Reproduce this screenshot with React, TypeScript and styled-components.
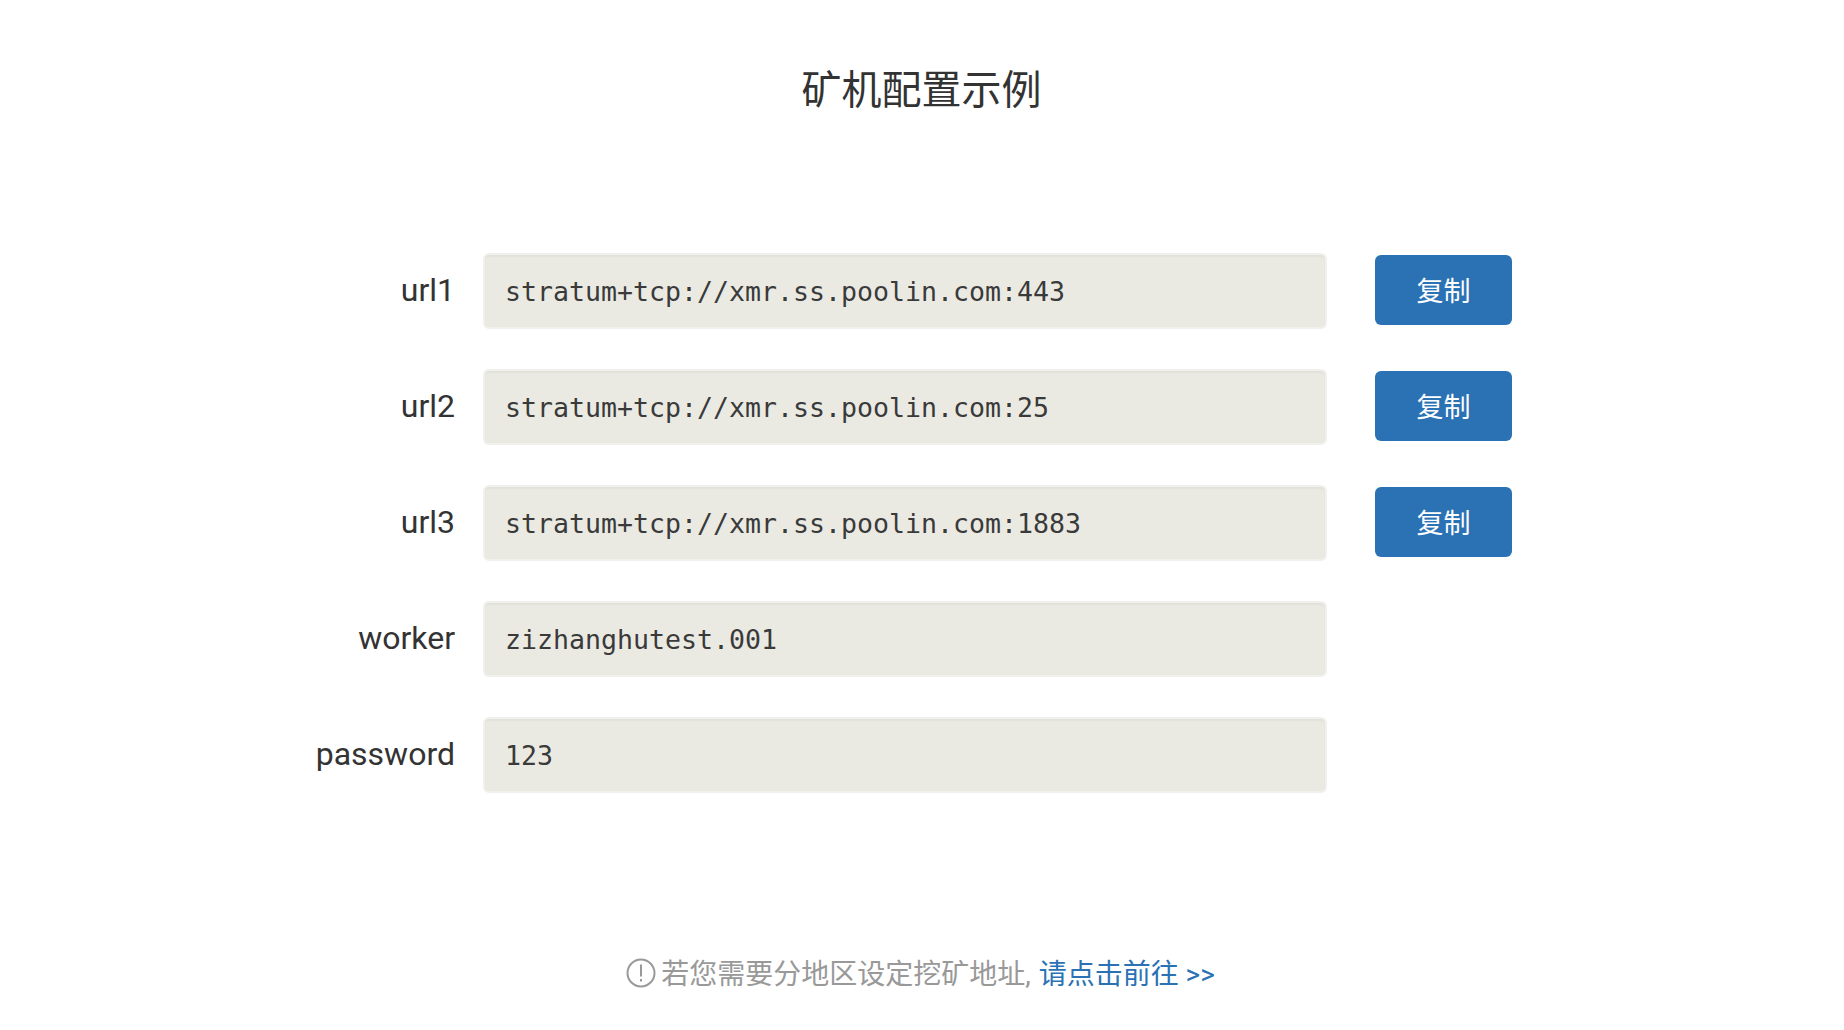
import React from "react";
import styled, { createGlobalStyle } from "styled-components";

const Global = createGlobalStyle`
  html, body { margin: 0; padding: 0; background: #fff; }
  body { font-family: Roboto, "Noto Sans CJK SC", sans-serif; color: #333; }
`;

const Page = styled.div`
  width: 1844px;
  height: 1030px;
  overflow: hidden;
  display: flex;
  flex-direction: column;
  align-items: center;
`;

const Title = styled.h1`
  margin: 61px 0 0 -1px;
  height: 60px;
  font-size: 40px;
  line-height: 60px;
  font-weight: 400;
  color: #333;
  font-family: Roboto, "Noto Sans CJK SC", sans-serif;
`;

const Form = styled.div`
  margin-top: 132px;
  width: 100%;
  padding-left: 300px;
  box-sizing: border-box;
  display: flex;
  flex-direction: column;
  gap: 40px;
`;

const Row = styled.div`
  display: flex;
  align-items: center;
  height: 76px;
`;

const Label = styled.label`
  width: 155px;
  text-align: right;
  font-size: 32px;
  line-height: 40px;
  color: #333;
  margin-right: 28px;
  margin-top: -2px;
`;

const Field = styled.div`
  box-sizing: border-box;
  width: 844px;
  height: 76px;
  border: 2px solid #f0f0ed;
  border-radius: 6px;
  background: #eaeae3;
  box-shadow: inset 0 2px 2px rgba(0, 0, 0, 0.035);
  padding: 0 20px;
  display: flex;
  align-items: center;
  font-family: "DejaVu Sans Mono", monospace;
  font-size: 26.58px;
  color: #3a3a3a;
`;

const CopyButton = styled.button`
  margin: -2px 0 0 48px;
  width: 137px;
  height: 70px;
  border: 0;
  border-radius: 6px;
  background: #2b72b5;
  color: #fff;
  font-family: Roboto, "Noto Sans CJK SC", sans-serif;
  font-size: 27px;
  padding: 0 0 2px;
`;

const Note = styled.p`
  margin: 162px 0 0 -1px;
  display: flex;
  align-items: center;
  font-size: 28px;
  line-height: 40px;
  color: #999;
`;

const NoteIcon = styled.svg`
  width: 30px;
  height: 30px;
  margin: -4px 5px 0 -2px;
  flex: none;
`;

const NoteLink = styled.a`
  color: #2b72b5;
  text-decoration: none;
  margin-left: 8px;
`;

const rows = [
  { label: "url1", value: "stratum+tcp://xmr.ss.poolin.com:443", copy: true },
  { label: "url2", value: "stratum+tcp://xmr.ss.poolin.com:25", copy: true },
  { label: "url3", value: "stratum+tcp://xmr.ss.poolin.com:1883", copy: true },
  { label: "worker", value: "zizhanghutest.001", copy: false },
  { label: "password", value: "123", copy: false },
];

export default function App() {
  return (
    <Page>
      <Global />
      <Title>矿机配置示例</Title>
      <Form>
        {rows.map((r) => (
          <Row key={r.label}>
            <Label>{r.label}</Label>
            <Field>{r.value}</Field>
            {r.copy && <CopyButton>复制</CopyButton>}
          </Row>
        ))}
      </Form>
      <Note>
        <NoteIcon viewBox="0 0 30 30" fill="none" stroke="#999" strokeWidth="2">
          <circle cx="15" cy="15" r="13.5" />
          <path d="M15 6.5v12M15 21v2.5" />
        </NoteIcon>
        若您需要分地区设定挖矿地址,
        <NoteLink href="#">请点击前往 &gt;&gt;</NoteLink>
      </Note>
    </Page>
  );
}
